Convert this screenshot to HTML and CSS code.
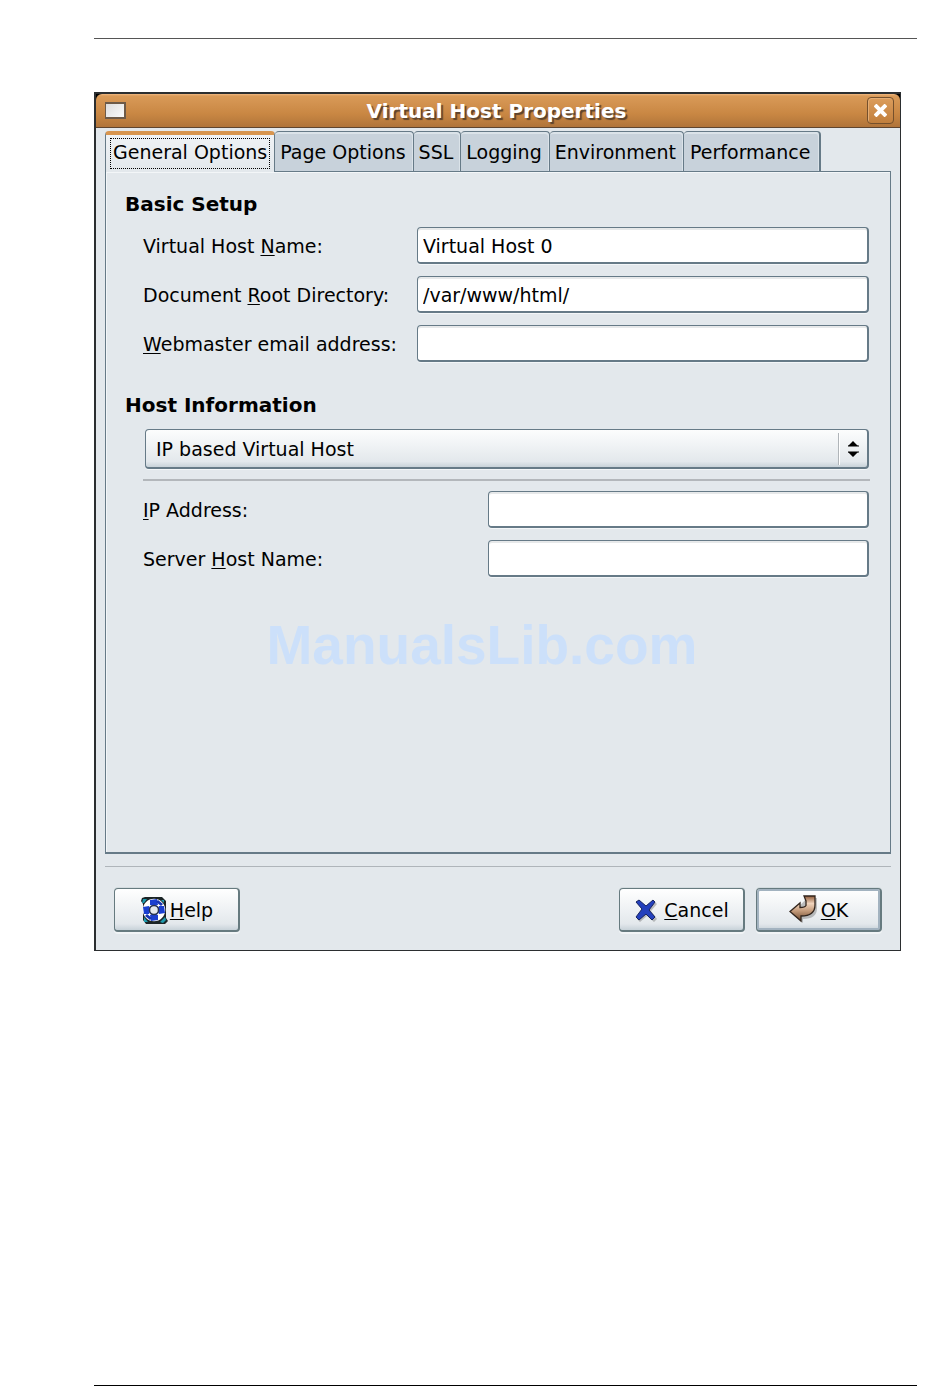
FILE: index.html
```
<!DOCTYPE html>
<html lang="en">
<head>
  <meta charset="UTF-8">
  <meta name="viewport" content="width=device-width, initial-scale=1.0">
  <title>Virtual Host Properties</title>
  <link rel="stylesheet" href="styles.css">
</head>
<body>
  <hr class="page-rule">
  <main class="window">
    <header class="titlebar">
      <span class="window-icon"></span>
      <h1>Virtual Host Properties</h1>
      <button class="close" aria-label="Close">
        <svg width="13" height="13" viewBox="0 0 13 13"><path d="M1 1l11 11M12 1L1 12" stroke="#fff" stroke-width="4"/></svg>
      </button>
    </header>

    <div class="content">
      <div class="tabs" role="tablist">
        <button class="tab active" role="tab" aria-selected="true"><span>General Options</span></button>
        <button class="tab" role="tab">Page Options</button>
        <button class="tab" role="tab">SSL</button>
        <button class="tab" role="tab">Logging</button>
        <button class="tab" role="tab">Environment</button>
        <button class="tab" role="tab">Performance</button>
      </div>

      <form class="panel" id="host-form">
        <h2>Basic Setup</h2>
        <div class="fields">
          <label for="host-name">Virtual Host <u>N</u>ame:</label>
          <input type="text" id="host-name" value="Virtual Host 0">
          <label for="doc-root">Document <u>R</u>oot Directory:</label>
          <input type="text" id="doc-root" value="/var/www/html/">
          <label for="email"><u>W</u>ebmaster email address:</label>
          <input type="text" id="email">
        </div>

        <h2>Host Information</h2>
        <div class="host-type">
          <select aria-label="Host type">
            <option>IP based Virtual Host</option>
          </select>
          <svg class="arrows" width="18" height="32" viewBox="0 0 18 32">
            <path d="M.5 0v32" stroke="#b0b5b9"/>
            <path d="M1.500 0v32" stroke="#fff"/>
            <path d="M15 8l5 5H10zM15 24l5-5H10z"/>
            <path d="M10 13h11M10 19h11" stroke="#000"/>
          </svg>
        </div>
        <hr class="divider">
        <div class="fields host-info">
          <label for="ip"><u>I</u>P Address:</label>
          <input type="text" id="ip">
          <label for="server">Server <u>H</u>ost Name:</label>
          <input type="text" id="server">
        </div>
        <p class="watermark">ManualsLib.com</p>
      </form>
    </div>

    <footer class="actions">
      <button class="button help">
        <svg width="28" height="28" viewBox="0 0 28 28">
          <path d="M5 1h17l4 4v17l2 3-3 3h-4H6l-3-4V8L1 5l1-3z" fill="#1b2426"/>
          <path d="M2 7l1-4h4L4 7zM21 4h3v3zM25 21l1 3-3 3-3-1zM4 21l4 5H4z" fill="#1d9bae"/>
          <circle cx="14" cy="14" r="9" fill="none" stroke="#fff" stroke-width="7" transform="translate(1.400 1.400) scale(.9)"/>
          <path d="M10 4l7-1 1 6-4 1-4-1zM24 10l1 7-6 1-2-4 2-4zM18 24l-7 1-1-6 4-2 4 2zM4 18l-1-7 6-1 2 4-2 4z" fill="#1a3fd0"/>
          <path d="M7 18l5 4-2 2-5-4zM21 10l-5-4 2-2 5 4z" fill="#1635b4"/>
          <circle cx="14" cy="14" r="4.500" fill="#e4e9ec" stroke="#26324e" stroke-width="1.500"/>
        </svg>
        <span><u>H</u>elp</span>
      </button>
      <button class="button cancel">
        <svg width="24" height="24" viewBox="0 0 24 24">
          <path d="M3 5l2-2 7 5 7-6 3 3-6 7 6 8-3 3-7-6-7 6-3-3 6-8z" fill="#777" opacity=".45" transform="translate(1 1)"/>
          <path d="M2 4l3-2 7 6 7-6 2 2-6 8 6 7-3 3-6-6-7 6-3-3 6-8z" fill="#2440bd" stroke="#17245f"/>
        </svg>
        <span><u>C</u>ancel</span>
      </button>
      <button class="button default">
        <svg width="28" height="30" viewBox="0 0 28 30">
          <defs>
            <linearGradient id="copper" x2="0" y2="1">
              <stop offset="0" stop-color="#8f5a38"/>
              <stop offset=".3" stop-color="#f0d4bd"/>
              <stop offset=".6" stop-color="#c39a7a"/>
              <stop offset="1" stop-color="#6b452b"/>
            </linearGradient>
          </defs>
          <path d="M18 3h10v10q0 11-14 11v4L3 19" fill="#555" opacity=".35"/>
          <path d="M15 1h11v9q0 11-14 11v5L1 16.500 11 8v4.500q5 0 6-2V6z" fill="url(#copper)" stroke="#32251d" stroke-width="1.300"/>
        </svg>
        <span><u>O</u>K</span>
      </button>
    </footer>
  </main>
  <hr class="page-rule bottom">
</body>
</html>
```
FILE: styles.css
```
* {
  box-sizing: border-box;
}
body {
  display: flex;
  flex-direction: column;
  min-height: 100vh;
  margin: 0;
  padding: 38px 33px 12px 94px;
  background: #fff;
  color: #000;
  font: 19px/24px "DejaVu Sans", sans-serif;
}
button, input, select {
  font: inherit;
  color: inherit;
}
u {
  text-decoration-thickness: 1px;
  text-underline-offset: 2px;
}
.page-rule {
  width: 100%;
  height: 1px;
  margin: 0;
  border: 0;
  background: #555;
}
.page-rule.bottom {
  margin-top: auto;
  background: #000;
}
.window {
  margin: 53px 16px 0 0;
  border: solid #2b2e30;
  border-width: 2px 1px 1px 2px;
  background: linear-gradient(#000, #000) top / 100% 10px no-repeat #e3e8ec;
}
.titlebar {
  display: flex;
  align-items: center;
  height: 34px;
  padding: 0 6px 0 9px;
  border-bottom: 1px solid #5f452f;
  border-radius: 6px 6px 0 0;
  background: linear-gradient(#f0b880 0, #d99a58 2px, #c98743 60%, #b0743a);
}
.window-icon {
  width: 21px;
  height: 17px;
  border: 1px solid #6d5a48;
  border-width: 2px 2px 2px 1px;
  background: linear-gradient(135deg, #ddd, #fafafa);
}
.titlebar h1 {
  flex: 1;
  margin: 0;
  color: #fff;
  font-size: 20px;
  line-height: 24px;
  text-align: center;
  text-shadow: 2px 2px 1px #5d432c;
}
.close {
  display: grid;
  place-items: center;
  width: 27px;
  height: 27px;
  padding: 0;
  border: 1px solid #75502c;
  border-radius: 4px;
  background: linear-gradient(#dc9d5c, #c17f3d);
  box-shadow: inset 1px 1px #e5ad74;
}
.content {
  padding: 3px 9px 12px;
}
.tabs {
  display: flex;
}
.tab {
  height: 40px;
  padding: 0 7px 0 5px;
  border: solid #667a87;
  border-width: 1px 1px 0 0;
  border-radius: 4px 4px 0 0;
  background: #c8d2db;
  box-shadow: inset -1px 2px #dbe3e9;
  white-space: nowrap;
}
.tab:last-child {
  padding: 0 9px 0 6px;
  border-right-width: 2px;
}
.tab.active {
  height: 41px;
  margin-bottom: -1px;
  padding: 0 4px;
  border-left-width: 1px;
  border-top: 4px solid #d8954f;
  background: linear-gradient(#eff2f5, #e3e8ec);
  box-shadow: none;
  z-index: 1;
}
.tab.active span {
  display: block;
  height: 31px;
  padding: 1px 2px;
  border: 1px dotted #000;
}
.panel {
  min-height: 683px;
  padding: 20px 21px 0 19px;
  border: 1px solid #667a87;
  border-bottom-width: 2px;
  box-shadow: inset 1px 1px #f3f6f8;
}
.panel h2 {
  margin: 0;
  font-size: 20px;
  line-height: 24px;
}
.fields {
  display: grid;
  grid-template-columns: 274px 1fr;
  gap: 12px 0;
  align-items: center;
  margin: 11px 0 31px;
  padding-left: 18px;
}
.fields.host-info {
  grid-template-columns: 345px 1fr;
  margin: 10px 0 0;
}
.fields input {
  width: 100%;
  height: 37px;
  padding: 1px 5px 0;
  border: 1px solid #667a87;
  border-width: 1px 2px 2px 1px;
  border-radius: 4px;
  background: #fff;
  box-shadow: inset 0 2px #e7e9ea, 0 1px #f3f6f8;
  outline: none;
}
.host-type {
  position: relative;
  margin: 12px 0 0 20px;
}
.host-type select {
  display: block;
  width: 100%;
  height: 40px;
  padding: 0 40px 0 10px;
  border: 1px solid #667a87;
  border-width: 1px 2px 2px 1px;
  border-radius: 4px;
  background: linear-gradient(#fcfdfd, #e3e8ec 85%, #c8d2d9);
  box-shadow: 0 1px #f3f6f8;
  appearance: none;
}
.arrows {
  position: absolute;
  top: 4px;
  right: 13px;
  overflow: visible;
  pointer-events: none;
}
.divider {
  height: 2px;
  margin: 10px -1px 0 18px;
  border: 0;
  background: #b3b7bb;
}
.watermark {
  margin: 36px 0 0;
  padding-right: 30px;
  color: #cce0fa;
  font: bold 55px/64px "Liberation Sans", sans-serif;
  text-align: center;
}
.actions {
  display: flex;
  gap: 11px;
  margin: 0 9px;
  padding: 21px 9px 18px;
  border-top: 1px solid #afb5ba;
}
.button {
  display: flex;
  align-items: center;
  justify-content: center;
  width: 126px;
  height: 44px;
  padding: 0;
  border: 1px solid #667a7f;
  border-width: 1px 2px 2px 1px;
  border-radius: 4px;
  background: linear-gradient(#fff, #e3e8ec 85%, #c8d2d9);
  box-shadow: 0 2px #f1f4f6, 0 -1px #d4dcdf;
}
.help {
  gap: 2px;
  margin-right: auto;
}
.cancel {
  gap: 6px;
}
.default {
  gap: 4px;
  box-shadow: inset 0 0 0 2px #a3b3c0, 0 2px #f1f4f6, 0 -1px #d4dcdf;
}
```
